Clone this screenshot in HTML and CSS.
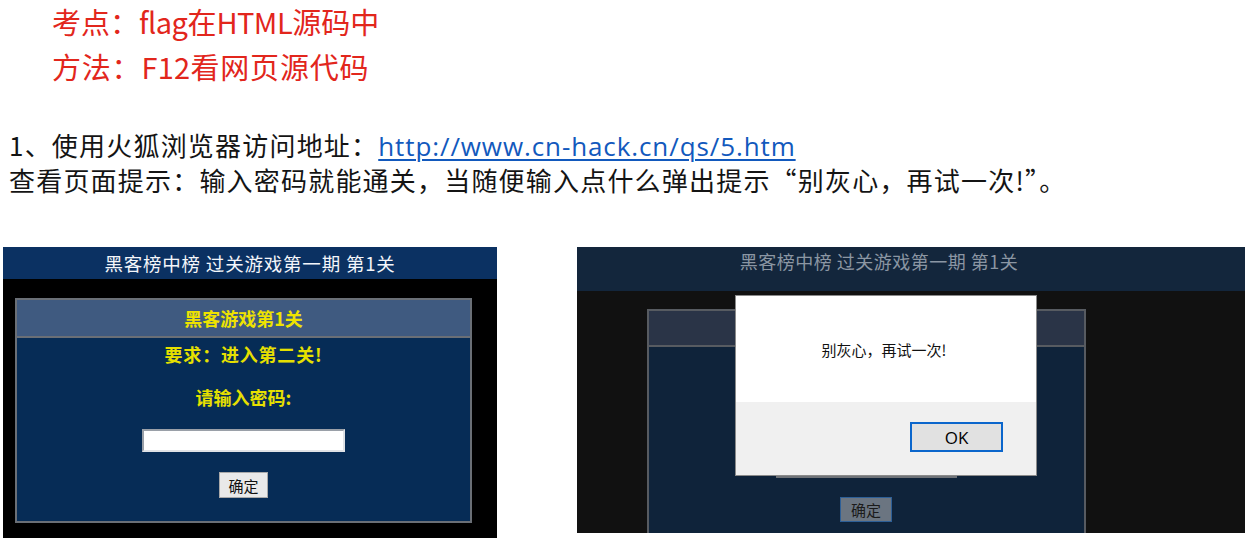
FILE: index.html
```html
<!DOCTYPE html>
<html lang="zh-CN">
<head>
<meta charset="utf-8">
<title>CTF 第1关</title>
<link rel="stylesheet" href="styles.css">
</head>
<body>
<section class="points">
  <p class="point">考点：<span class="lat">flag</span>在<span class="lat">HTML</span>源码中</p>
  <p class="point point-2">方法：<span class="lat">F12</span>看网页源代码</p>
</section>
<section class="steps">
  <p class="step">1、使用火狐浏览器访问地址：<a class="link" href="#">http://www.cn-hack.cn/qs/5.htm</a></p>
  <p class="step">查看页面提示：输入密码就能通关，当随便输入点什么弹出提示“别灰心，再试一次!”。</p>
</section>
<section class="shots">
  <div class="shot shot-a">
    <div class="shot-head">黑客榜中榜 过关游戏第一期 第1关</div>
    <div class="shot-body">
      <div class="panel">
        <div class="panel-title">黑客游戏第1关</div>
        <div class="panel-main">
          <div class="req">要求：进入第二关!</div>
          <div class="ask">请输入密码:</div>
          <div class="field"></div>
          <div class="btn">确定</div>
        </div>
      </div>
    </div>
  </div>
  <div class="shot shot-b">
    <div class="shot-head">黑客榜中榜 过关游戏第一期 第1关</div>
    <div class="shot-body">
      <div class="panel">
        <div class="panel-title"></div>
        <div class="panel-main">
          <div class="field"></div>
          <div class="btn">确定</div>
        </div>
      </div>
    </div>
    <div class="dialog">
      <div class="dialog-msg">别灰心，再试一次!</div>
      <div class="dialog-foot"><div class="ok">OK</div></div>
    </div>
  </div>
</section>
</body>
</html>
```
FILE: styles.css
```css
* { box-sizing: border-box; }
html, body { margin: 0; padding: 0; background: #ffffff; }
body { width: 1249px; height: 540px; overflow: hidden; font-family: "Noto Sans CJK SC", sans-serif; }
p { margin: 0; }

.points { padding-left: 52px; display: flex; flex-direction: column; gap: 3px; }
.point { font-size: 29px; line-height: 42px; color: #e2261c; white-space: nowrap; }
.point-2 { letter-spacing: 0.8px; }
.lat { letter-spacing: -0.5px; }
.point-2 .lat { letter-spacing: 0.3px; }

.steps { margin-top: 41px; padding-left: 9px; }
.step { font-family: "Noto Sans CJK SC", sans-serif; font-size: 26px; line-height: 33px; color: #141414; letter-spacing: 1.2px; white-space: nowrap; }
.link { color: #1259bd; text-decoration: underline; text-decoration-thickness: 2px; text-underline-offset: 3px; font-family: "Open Sans", sans-serif; letter-spacing: 0.9px; font-size: 26px; }

.shots { margin-top: 51px; display: flex; align-items: flex-start; padding-left: 3px; gap: 80px; }
.shot { position: relative; overflow: hidden; display: flex; flex-direction: column; }
.shot-a { width: 494px; height: 291px; background: #000; }
.shot-b { width: 668px; height: 286px; background: #111111; }

.shot-head { flex-shrink: 0; display: flex; align-items: center; justify-content: center; font-size: 18.5px; letter-spacing: 0.8px; }
.shot-a .shot-head { height: 32px; background: #0b3162; color: #f4f6fa; }
.shot-b .shot-head { height: 44px; background: #13263c; color: #8b96a3; align-items: flex-start; padding-top: 1px; padding-right: 64px; font-size: 18px; letter-spacing: 0.5px; }

.shot-body { flex: 1; min-height: 0; }
.shot-a .shot-body { padding: 19px 0 0 12px; }
.shot-b .shot-body { padding: 18px 0 0 70px; }

.panel { display: flex; flex-direction: column; border: 2px solid #6a6f76; }
.shot-a .panel { width: 457px; height: 225px; background: #062c56; }
.shot-b .panel { width: 439px; height: 260px; background: #0f233a; border-color: #575b61; }

.panel-title { flex-shrink: 0; display: flex; align-items: center; justify-content: center; border-bottom: 2px solid #6a6f76; color: #eee300; font-size: 18px; font-weight: 700; }
.shot-a .panel-title { height: 38px; background: #3f5a80; }
.shot-b .panel-title { height: 36px; background: #2a3447; border-color: #575b61; }

.panel-main { display: flex; flex-direction: column; align-items: center; color: #e6e000; font-size: 18px; font-weight: 700; }
.shot-a .panel-main { padding-top: 3px; }
.req { height: 26px; line-height: 26px; letter-spacing: 0.8px; }
.ask { height: 26px; line-height: 26px; margin-top: 17px; }
.field { flex-shrink: 0; width: 203px; height: 23px; background: #ffffff; border: 2px solid #9aa0a8; border-right-color: #dfe2e6; border-bottom-color: #dfe2e6; }
.shot-a .field { margin-top: 19px; }
.btn { flex-shrink: 0; width: 49px; height: 26px; display: flex; align-items: center; justify-content: center; font-size: 15px; font-weight: 400; color: #111; background: #e9e9e9; border: 1px solid #a9a9a9; }
.shot-a .btn { margin-top: 20px; }

.shot-b .panel-main { padding-top: 108px; }
.shot-b .field { width: 181px; background: #e9e9e9; border: none; border-bottom: 2px solid #6f7378; }
.shot-b .btn { margin-top: 19px; width: 52px; height: 25px; background: #6b7581; border-color: #2d5f97; color: #1b1b1b; margin-left: -1px; }

.dialog { position: absolute; left: 158px; top: 48px; width: 302px; height: 181px; border: 1px solid #8a8a8a; background: #ffffff; display: flex; flex-direction: column; }
.dialog-msg { height: 106px; display: flex; align-items: center; justify-content: center; font-size: 15px; color: #111; padding-right: 4px; }
.dialog-foot { flex: 1; background: #f0f0f0; display: flex; justify-content: flex-end; align-items: flex-start; padding: 20px 33px 0 0; }
.ok { width: 93px; height: 30px; border: 2px solid #0b66cc; background: #e1e1e1; display: flex; align-items: center; justify-content: center; font-family: "Open Sans", sans-serif; font-size: 17px; color: #000; }
```
